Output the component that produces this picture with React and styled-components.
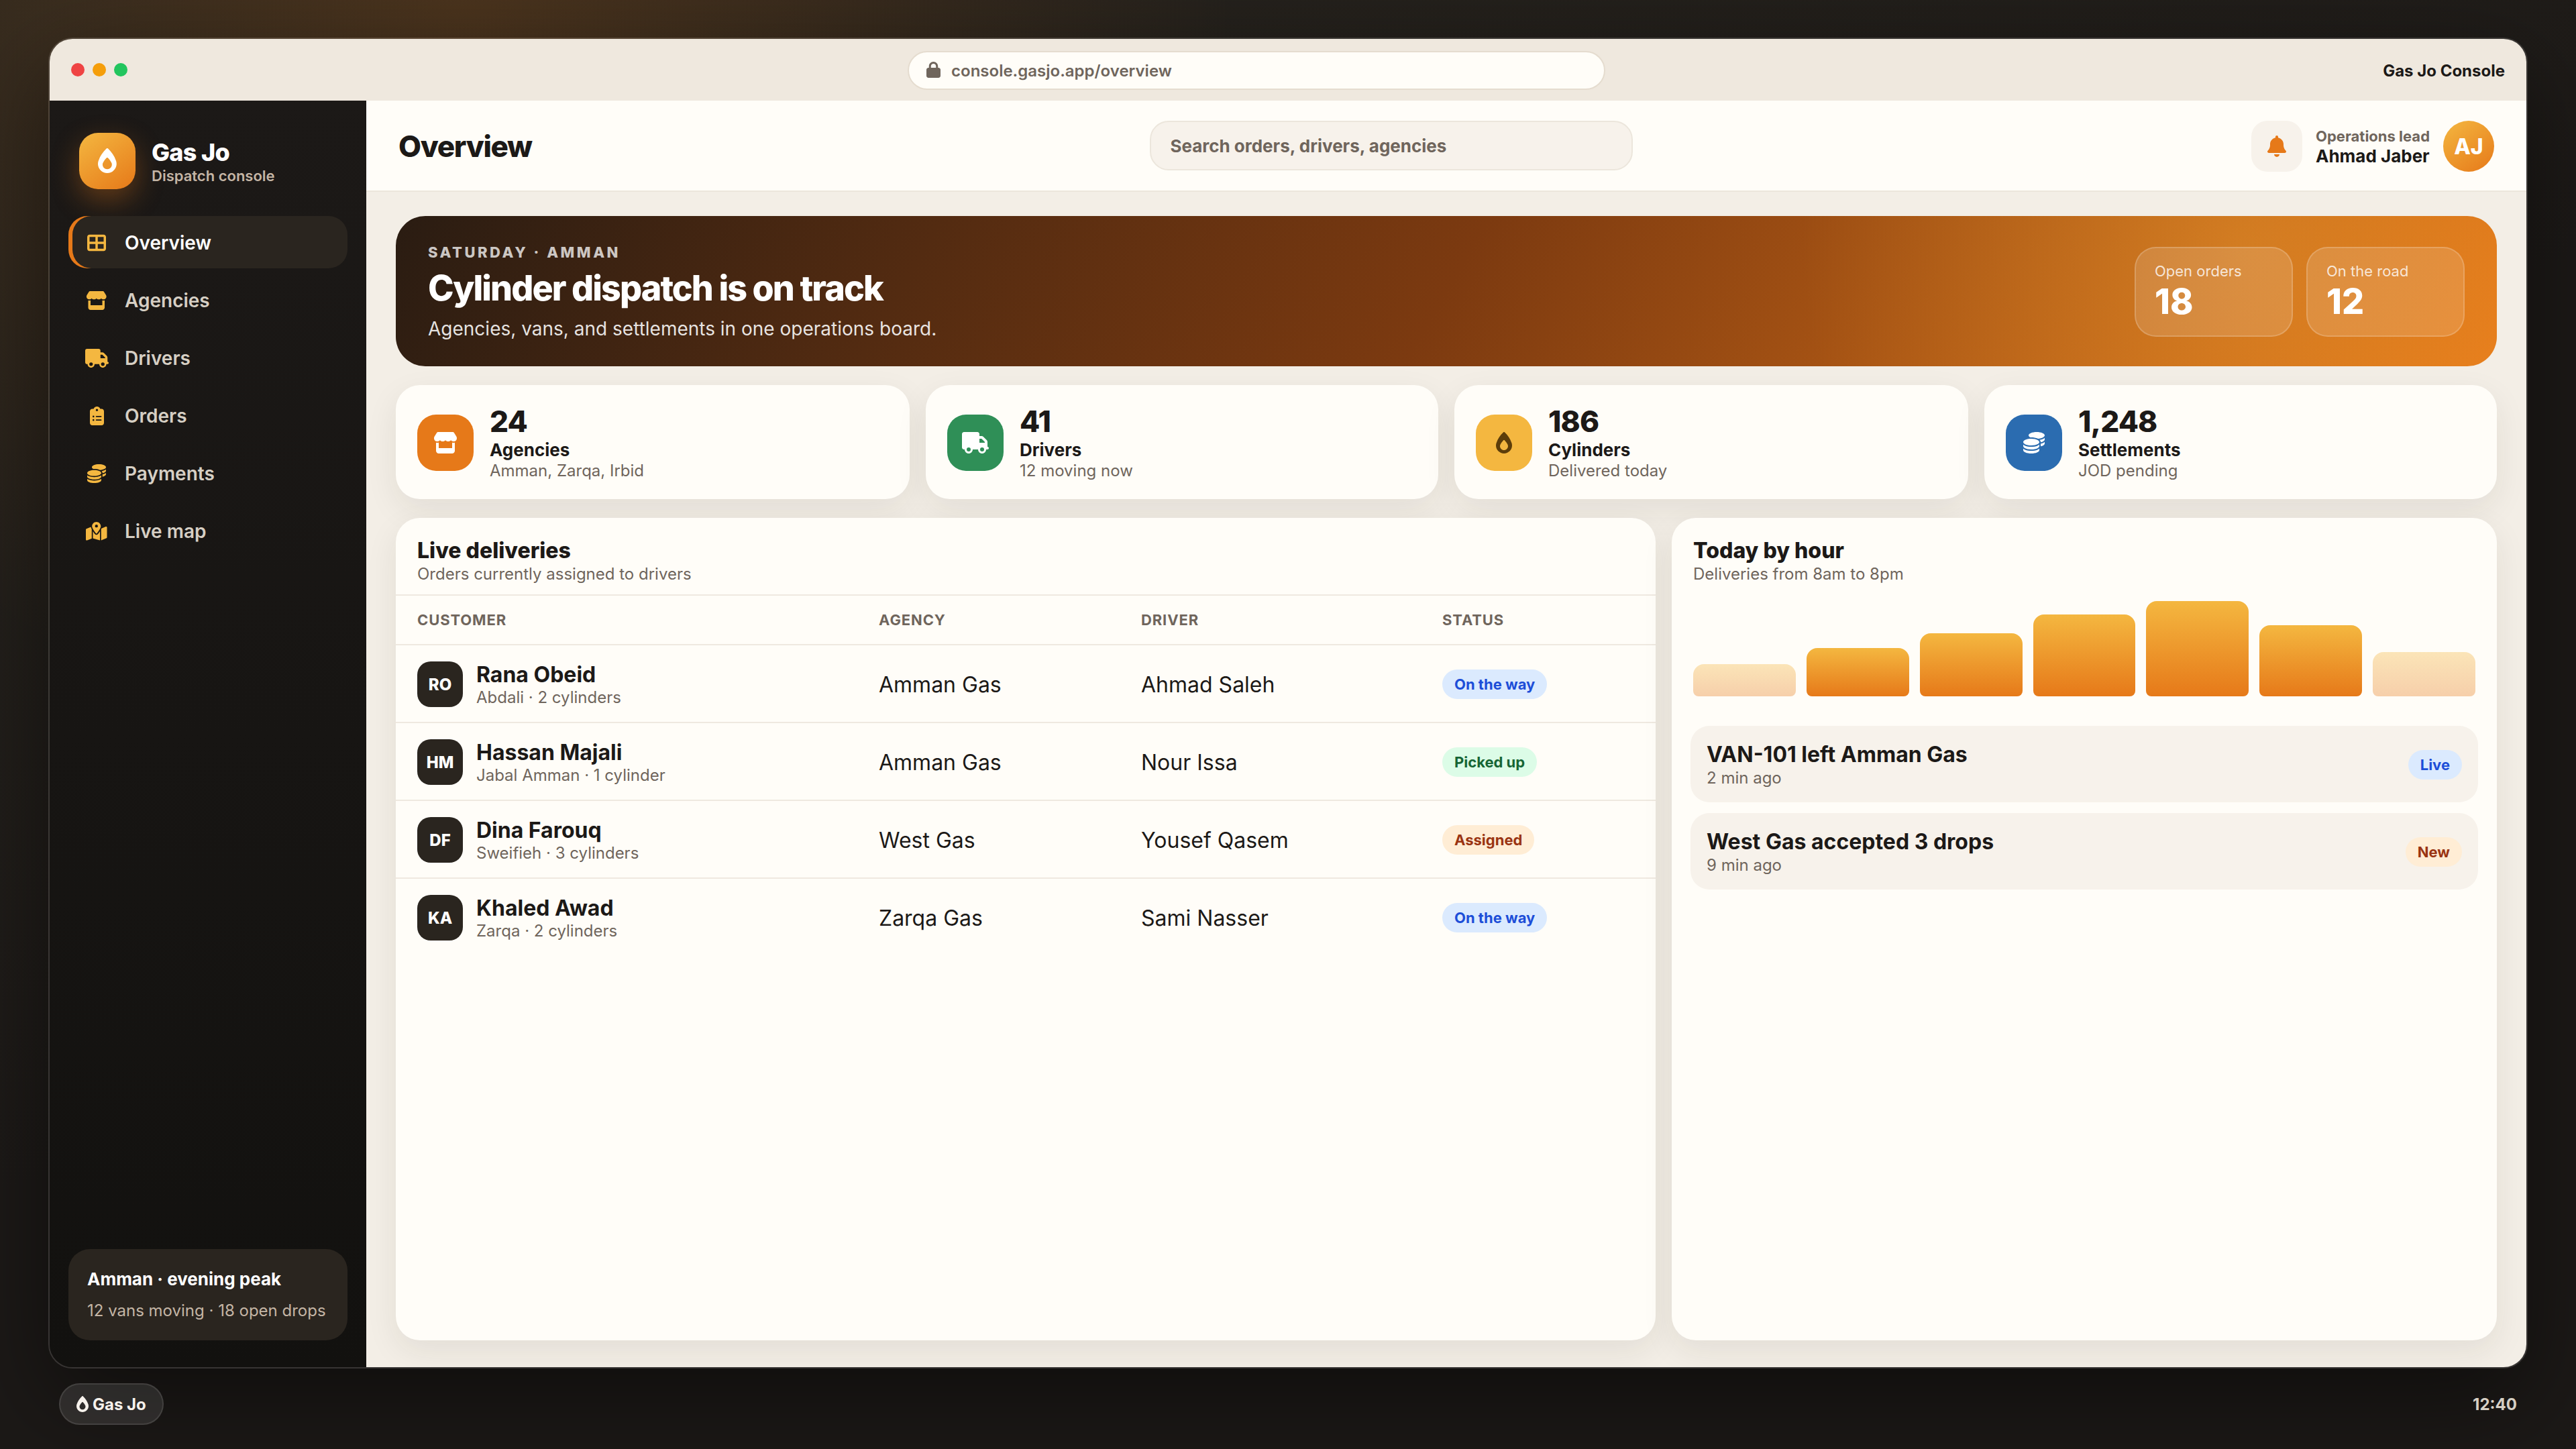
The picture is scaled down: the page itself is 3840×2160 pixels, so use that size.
import React from 'react'
import styled, { createGlobalStyle } from 'styled-components'
import {
  FaBell,
  FaClipboardList,
  FaCoins,
  FaFireFlameSimple,
  FaLock,
  FaMapLocationDot,
  FaStore,
  FaTableCellsLarge,
  FaTruck
} from 'react-icons/fa6'

const navItems = [
  { label: 'Overview', icon: FaTableCellsLarge, ratio: 1, active: true },
  { label: 'Agencies', icon: FaStore, ratio: 1.125 },
  { label: 'Drivers', icon: FaTruck, ratio: 1.25 },
  { label: 'Orders', icon: FaClipboardList, ratio: 0.75 },
  { label: 'Payments', icon: FaCoins, ratio: 1 },
  { label: 'Live map', icon: FaMapLocationDot, ratio: 1.125 }
]

const stats = [
  { value: '24', label: 'Agencies', note: 'Amman, Zarqa, Irbid', icon: FaStore, ratio: 1.125, bg: '#e67919' },
  { value: '41', label: 'Drivers', note: '12 moving now', icon: FaTruck, ratio: 1.25, bg: '#2f8f57' },
  { value: '186', label: 'Cylinders', note: 'Delivered today', icon: FaFireFlameSimple, ratio: 0.75, bg: '#f4b740', color: '#5c3d0a' },
  { value: '1,248', label: 'Settlements', note: 'JOD pending', icon: FaCoins, ratio: 1, bg: '#2b6cb0' }
]

const deliveries = [
  { initials: 'RO', name: 'Rana Obeid', note: 'Abdali · 2 cylinders', agency: 'Amman Gas', driver: 'Ahmad Saleh', status: 'On the way', tone: 'blue' },
  { initials: 'HM', name: 'Hassan Majali', note: 'Jabal Amman · 1 cylinder', agency: 'Amman Gas', driver: 'Nour Issa', status: 'Picked up', tone: 'green' },
  { initials: 'DF', name: 'Dina Farouq', note: 'Sweifieh · 3 cylinders', agency: 'West Gas', driver: 'Yousef Qasem', status: 'Assigned', tone: 'orange' },
  { initials: 'KA', name: 'Khaled Awad', note: 'Zarqa · 2 cylinders', agency: 'Zarqa Gas', driver: 'Sami Nasser', status: 'On the way', tone: 'blue' }
]

const hours = [
  { height: 48, muted: true },
  { height: 72 },
  { height: 94 },
  { height: 122 },
  { height: 142 },
  { height: 106 },
  { height: 66, muted: true }
]

const alerts = [
  { title: 'VAN-101 left Amman Gas', time: '2 min ago', status: 'Live', tone: 'blue' },
  { title: 'West Gas accepted 3 drops', time: '9 min ago', status: 'New', tone: 'orange' }
]

const tones = {
  blue: { bg: '#dbeafe', color: '#1d4ed8' },
  green: { bg: '#dcfce7', color: '#166534' },
  orange: { bg: '#ffedd5', color: '#9a3412' }
}

const App = () => {
  return (
    <>
      <GlobalStyle />
      <Desktop>
        <Window>
          <TitleBar>
            <Lights>
              <Light $color='#ef4444' />
              <Light $color='#f59e0b' />
              <Light $color='#22c55e' />
            </Lights>
            <Address>
              <Glyph $ratio={0.875}><FaLock /></Glyph>
              <span>console.gasjo.app/overview</span>
            </Address>
            <WindowTitle>Gas Jo Console</WindowTitle>
          </TitleBar>
          <Body>
            <Sidebar>
              <Brand>
                <Logo><Glyph $ratio={0.75}><FaFireFlameSimple /></Glyph></Logo>
                <div>
                  <BrandName>Gas Jo</BrandName>
                  <BrandNote>Dispatch console</BrandNote>
                </div>
              </Brand>
              <Nav>
                {navItems.map(({ label, icon: Icon, ratio, active }) => (
                  <NavItem key={label} $active={active}>
                    <NavIcon>
                      <Glyph $ratio={ratio}><Icon /></Glyph>
                    </NavIcon>
                    {label}
                  </NavItem>
                ))}
              </Nav>
              <SideCard>
                <strong>Amman · evening peak</strong>
                <span>12 vans moving · 18 open drops</span>
              </SideCard>
            </Sidebar>
            <Main>
              <TopBar>
                <PageTitle>Overview</PageTitle>
                <Search>Search orders, drivers, agencies</Search>
                <Actions>
                  <BellButton><Glyph $ratio={0.875}><FaBell /></Glyph></BellButton>
                  <User>
                    <span>Operations lead</span>
                    <strong>Ahmad Jaber</strong>
                  </User>
                  <Avatar>AJ</Avatar>
                </Actions>
              </TopBar>
              <Content>
                <Hero>
                  <HeroCopy>
                    <Eyebrow>SATURDAY · AMMAN</Eyebrow>
                    <HeroTitle>Cylinder dispatch is on track</HeroTitle>
                    <HeroText>Agencies, vans, and settlements in one operations board.</HeroText>
                  </HeroCopy>
                  <HeroStats>
                    <HeroStat>
                      <span>Open orders</span>
                      <strong>18</strong>
                    </HeroStat>
                    <HeroStat>
                      <span>On the road</span>
                      <strong>12</strong>
                    </HeroStat>
                  </HeroStats>
                </Hero>
                <StatGrid>
                  {stats.map(({ value, label, note, icon: Icon, ratio, bg, color }) => (
                    <StatCard key={label}>
                      <StatIcon $bg={bg} $color={color}>
                        <Glyph $ratio={ratio}><Icon /></Glyph>
                      </StatIcon>
                      <div>
                        <StatValue>{value}</StatValue>
                        <StatLabel>{label}</StatLabel>
                        <Note>{note}</Note>
                      </div>
                    </StatCard>
                  ))}
                </StatGrid>
                <Panels>
                  <Panel>
                    <PanelHead $line>
                      <PanelTitle>Live deliveries</PanelTitle>
                      <Note>Orders currently assigned to drivers</Note>
                    </PanelHead>
                    <Table>
                      <colgroup>
                        <Col $width={688} />
                        <Col $width={391} />
                        <Col $width={449} />
                        <Col $width={350} />
                      </colgroup>
                      <thead>
                        <tr>
                          <th>CUSTOMER</th>
                          <th>AGENCY</th>
                          <th>DRIVER</th>
                          <th>STATUS</th>
                        </tr>
                      </thead>
                      <tbody>
                        {deliveries.map((row) => (
                          <tr key={row.initials}>
                            <td>
                              <Customer>
                                <Initials>{row.initials}</Initials>
                                <div>
                                  <Name>{row.name}</Name>
                                  <Note>{row.note}</Note>
                                </div>
                              </Customer>
                            </td>
                            <td>{row.agency}</td>
                            <td>{row.driver}</td>
                            <td><Badge $tone={row.tone}>{row.status}</Badge></td>
                          </tr>
                        ))}
                      </tbody>
                    </Table>
                  </Panel>
                  <Panel>
                    <PanelHead>
                      <PanelTitle>Today by hour</PanelTitle>
                      <Note>Deliveries from 8am to 8pm</Note>
                    </PanelHead>
                    <Chart>
                      {hours.map((hour, i) => (
                        <Bar key={i} $muted={hour.muted} style={{ height: hour.height }} />
                      ))}
                    </Chart>
                    <Alerts>
                      {alerts.map((alert) => (
                        <Alert key={alert.title}>
                          <AlertText>
                            <Name>{alert.title}</Name>
                            <Note>{alert.time}</Note>
                          </AlertText>
                          <AlertBadge $tone={alert.tone}>{alert.status}</AlertBadge>
                        </Alert>
                      ))}
                    </Alerts>
                  </Panel>
                </Panels>
              </Content>
            </Main>
          </Body>
        </Window>
        <TaskBar>
          <TaskPill>
            <Glyph $ratio={0.75}><FaFireFlameSimple /></Glyph>
            Gas Jo
          </TaskPill>
          <span>12:40</span>
        </TaskBar>
      </Desktop>
    </>
  )
}

const GlobalStyle = createGlobalStyle`
*{
    box-sizing: border-box;
}
body{
    margin: 0;
    font-family: Inter, "Liberation Sans", sans-serif;
    font-size: 32px;
    color: #1c1917;
}
`;

/* icons keep the width of their own viewBox */
const Glyph = styled.span`
display: block;
flex-shrink: 0;
svg{
    display: block;
    width: ${(p) => p.$ratio}em;
    height: 1em;
}
`;

const Desktop = styled.div`
width: 3840px;
height: 2160px;
display: flex;
flex-direction: column;
padding: 56px 72px 0;
overflow: hidden;
background:
    radial-gradient(circle at 18% 0%, rgba(230, 121, 25, 0.18), transparent 1150px),
    linear-gradient(160deg, #2a261f 0%, #1c1917 50%, #1c1917 100%);
`;

const Window = styled.div`
height: 1984px;
flex-shrink: 0;
display: flex;
flex-direction: column;
border: 2px solid rgba(255, 255, 255, 0.12);
border-radius: 36px;
overflow: hidden;
box-shadow: 0 48px 140px rgba(0, 0, 0, 0.45);
`;

const TitleBar = styled.div`
height: 92px;
flex-shrink: 0;
display: flex;
align-items: center;
justify-content: space-between;
padding: 0 32px;
background: #efe8de;
`;

const Lights = styled.div`
display: flex;
gap: 12px;
`;

const Light = styled.span`
width: 20px;
height: 20px;
border-radius: 50%;
background: ${(p) => p.$color};
`;

const Address = styled.div`
width: 1040px;
height: 58px;
margin: 2px 0 0 4px;
display: flex;
align-items: center;
gap: 16px;
padding: 0 26px;
background: #fffdf8;
border: 2px solid #e5dccf;
border-radius: 999px;
font-size: 24px;
font-weight: 600;
color: #6f655c;
svg{
    margin-bottom: 3px;
}
`;

const WindowTitle = styled.div`
margin-top: 2px;
font-size: 24px;
font-weight: 700;
`;

const Body = styled.div`
flex: 1;
display: flex;
min-height: 0;
`;

const Sidebar = styled.aside`
width: 472px;
flex-shrink: 0;
display: flex;
flex-direction: column;
padding: 40px 28px;
background: linear-gradient(180deg, #1c1917 0%, #12110f 100%);
color: #fff;
`;

const Brand = styled.div`
display: flex;
align-items: center;
gap: 24px;
padding: 8px 16px 40px;
`;

const Logo = styled.div`
width: 84px;
height: 84px;
display: flex;
align-items: center;
justify-content: center;
padding-bottom: 2px;
border-radius: 28px;
background: linear-gradient(145deg, #f4b740, #e67919);
box-shadow: 0 16px 40px rgba(230, 121, 25, 0.35);
font-size: 37px;
`;

const BrandName = styled.div`
font-size: 36px;
line-height: 44px;
font-weight: 800;
letter-spacing: -0.02em;
`;

const BrandNote = styled.div`
font-size: 22px;
line-height: 27px;
font-weight: 600;
color: #c4b5a5;
`;

const Nav = styled.nav`
flex: 1;
display: flex;
flex-direction: column;
gap: 8px;
`;

const NavItem = styled.div`
height: 78px;
display: flex;
align-items: center;
gap: 24px;
padding: 2px 24px 0;
border-radius: 28px;
font-size: 28px;
font-weight: 600;
color: ${(p) => (p.$active ? '#fff' : '#d6cfc4')};
background: ${(p) => (p.$active ? '#2a251f' : 'transparent')};
box-shadow: ${(p) => (p.$active ? 'inset 6px 0 0 #e67919' : 'none')};
`;

const NavIcon = styled.span`
width: 36px;
display: flex;
justify-content: center;
color: #f4b740;
`;

const SideCard = styled.div`
display: flex;
flex-direction: column;
gap: 15px;
padding: 29px 28px 28px;
border-radius: 32px;
background: #2a251f;
strong{
    font-size: 26px;
    line-height: 32px;
    font-weight: 700;
}
span{
    font-size: 24px;
    line-height: 32px;
    color: #c4b5a5;
}
`;

const Main = styled.main`
flex: 1;
min-width: 0;
display: flex;
flex-direction: column;
background: #f3eee6;
`;

const TopBar = styled.header`
height: 136px;
flex-shrink: 0;
display: flex;
align-items: center;
justify-content: space-between;
padding: 0 48px;
background: #fffdf8;
border-bottom: 2px solid #ece6dc;
`;

const PageTitle = styled.h1`
margin: 2px 0 0;
font-size: 44px;
font-weight: 800;
letter-spacing: -0.03em;
`;

const Search = styled.div`
width: 720px;
height: 74px;
display: flex;
align-items: center;
padding: 0 28px;
border: 2px solid #ece6dc;
border-radius: 28px;
background: #f7f2eb;
font-size: 26px;
font-weight: 700;
color: #6f655c;
`;

const Actions = styled.div`
display: flex;
align-items: center;
gap: 20px;
padding-top: 2px;
`;

const BellButton = styled.div`
width: 76px;
height: 76px;
display: flex;
align-items: center;
justify-content: center;
border-radius: 24px;
background: #f7f2eb;
color: #e67919;
`;

const User = styled.div`
width: 170px;
display: flex;
flex-direction: column;
padding-top: 2px;
white-space: nowrap;
span{
    font-size: 22px;
    line-height: 27px;
    font-weight: 700;
    color: #6f655c;
}
strong{
    font-size: 26px;
    line-height: 32px;
    font-weight: 700;
}
`;

const Avatar = styled.div`
width: 76px;
height: 76px;
display: flex;
align-items: center;
justify-content: center;
border-radius: 50%;
background: linear-gradient(145deg, #f4b740, #e67919);
color: #fff;
font-weight: 800;
`;

const Content = styled.div`
flex: 1;
min-height: 0;
display: flex;
flex-direction: column;
gap: 28px;
padding: 36px 44px 40px;
`;

const Hero = styled.section`
height: 224px;
flex-shrink: 0;
display: flex;
align-items: center;
justify-content: space-between;
padding: 0 48px;
border-radius: 44px;
background:
    radial-gradient(circle at 88% 20%, rgba(244, 183, 64, 0.28), transparent 24%),
    linear-gradient(120deg, #2a1c12 0%, #7c3a10 50%, #e67919 100%);
color: #fff;
`;

const HeroCopy = styled.div`
padding-top: 2px;
`;

const Eyebrow = styled.div`
font-size: 22px;
line-height: 27px;
font-weight: 800;
letter-spacing: 0.16em;
color: rgba(255, 255, 255, 0.75);
`;

const HeroTitle = styled.h2`
margin: 8px 0 12px;
font-size: 52px;
line-height: 63px;
font-weight: 800;
letter-spacing: -0.037em;
`;

const HeroText = styled.div`
font-size: 28px;
line-height: 34px;
color: rgba(255, 255, 255, 0.88);
`;

const HeroStats = styled.div`
display: flex;
gap: 20px;
padding-top: 2px;
`;

const HeroStat = styled.div`
width: 236px;
display: flex;
flex-direction: column;
padding: 21px 28px 19px;
border: 2px solid rgba(255, 255, 255, 0.18);
border-radius: 32px;
background: rgba(255, 255, 255, 0.14);
span{
    font-size: 22px;
    line-height: 27px;
    color: rgba(255, 255, 255, 0.8);
}
strong{
    font-size: 52px;
    line-height: 63px;
    font-weight: 800;
}
`;

const StatGrid = styled.section`
display: grid;
grid-template-columns: 766px 764px 766px 764px;
gap: 24px;
`;

const StatCard = styled.div`
height: 170px;
display: flex;
align-items: center;
gap: 24px;
padding: 0 32px;
border-radius: 36px;
background: #fffdf8;
box-shadow: 0 16px 48px rgba(40, 34, 20, 0.08);
`;

const StatIcon = styled.div`
width: 84px;
height: 84px;
display: flex;
align-items: center;
justify-content: center;
border-radius: 28px;
margin-top: 2px;
background: ${(p) => p.$bg};
color: ${(p) => p.$color || '#fff'};
`;

const StatValue = styled.div`
font-size: 44px;
line-height: 53px;
font-weight: 800;
letter-spacing: -0.02em;
`;

const StatLabel = styled.div`
font-size: 26px;
line-height: 32px;
font-weight: 700;
`;

const Note = styled.div`
font-size: 24px;
line-height: 29px;
color: #6f655c;
`;

const Panels = styled.section`
flex: 1;
min-height: 0;
display: grid;
grid-template-columns: 1878fr 1230fr;
gap: 24px;
`;

const Panel = styled.div`
border-radius: 36px;
background: #fffdf8;
box-shadow: 0 16px 48px rgba(40, 34, 20, 0.08);
overflow: hidden;
`;

const PanelHead = styled.div`
display: flex;
flex-direction: column;
gap: 1px;
padding: 29px 32px 16px;
border-bottom: ${(p) => (p.$line ? '2px solid #efe9e0' : 'none')};
`;

const PanelTitle = styled.h3`
margin: 0;
font-size: 32px;
line-height: 39px;
font-weight: 800;
`;

const Col = styled.col`
width: ${(p) => p.$width}px;
`;

const Table = styled.table`
width: 100%;
table-layout: fixed;
border-collapse: separate;
border-spacing: 0;
th{
    height: 74px;
    padding: 0 0 0 32px;
    border-bottom: 2px solid #efe9e0;
    text-align: left;
    font-size: 22px;
    font-weight: 700;
    letter-spacing: 0.04em;
    color: #6f655c;
}
td{
    height: 116px;
    padding: 2px 0 0 32px;
    border-bottom: 2px solid #efe9e0;
    vertical-align: middle;
}
tbody tr:last-child td{
    border-bottom: none;
    height: 114px;
}
`;

const Customer = styled.div`
display: flex;
align-items: center;
gap: 20px;
`;

const Initials = styled.div`
width: 68px;
height: 68px;
display: flex;
align-items: center;
justify-content: center;
border-radius: 20px;
background: #2a251f;
color: #fff;
font-size: 24px;
font-weight: 800;
`;

const Name = styled.div`
line-height: 39px;
font-weight: 700;
`;

const Badge = styled.span`
display: flex;
align-items: center;
width: fit-content;
height: 44px;
padding: 0 18px;
border-radius: 999px;
background: ${(p) => tones[p.$tone].bg};
color: ${(p) => tones[p.$tone].color};
font-size: 22px;
font-weight: 700;
`;

const Chart = styled.div`
height: 152px;
display: flex;
align-items: flex-end;
gap: 16px;
padding: 0 32px;
`;

const Bar = styled.div`
flex: 1;
border-radius: 16px 16px 8px 8px;
background: linear-gradient(180deg, #f4b740, #e67919);
opacity: ${(p) => (p.$muted ? 0.35 : 1)};
`;

const Alerts = styled.div`
display: flex;
flex-direction: column;
gap: 16px;
padding: 44px 28px 0;
`;

const Alert = styled.div`
height: 114px;
display: flex;
align-items: center;
justify-content: space-between;
padding: 0 24px;
border-radius: 28px;
background: #f7f2eb;
`;

const AlertText = styled.div`
display: flex;
flex-direction: column;
gap: 1px;
`;

const AlertBadge = styled(Badge)`
margin-top: 2px;
`;

const TaskBar = styled.footer`
flex: 1;
display: flex;
align-items: center;
justify-content: space-between;
padding: 0 16px 14px;
color: #d6cfc4;
font-size: 24px;
font-weight: 700;
`;

const TaskPill = styled.div`
height: 62px;
display: flex;
align-items: center;
gap: 6px;
padding: 0 24px;
border: 2px solid rgba(255, 255, 255, 0.1);
border-radius: 999px;
background: rgba(255, 255, 255, 0.1);
color: #f7f2ec;
`;

export default App
